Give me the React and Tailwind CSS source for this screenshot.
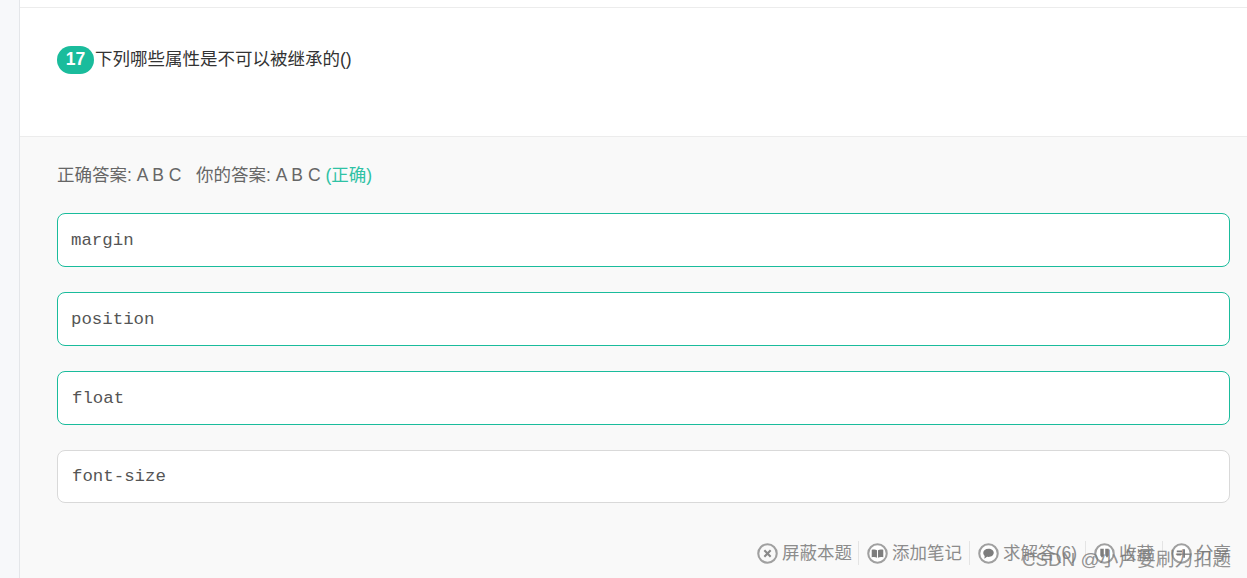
const sans = "font-['Liberation_Sans','Noto_Sans_CJK_SC',sans-serif]";

const options = [
  { text: 'margin', right: true, pad: 'pl-[13px] pt-[3px] h-[54px]' },
  { text: 'position', right: true, pad: 'pl-[13px] pt-[3px] h-[54px]' },
  { text: 'float', right: true, pad: 'pl-[14px] pt-[3px] h-[54px]' },
  { text: 'font-size', right: false, pad: 'pl-[14px] pt-[1px] h-[53px]' },
];

const BlockIcon = () => (
  <svg width="21" height="21" viewBox="0 0 20 20" fill="none">
    <circle cx="10" cy="10" r="8.800" stroke="#a0a0a0" strokeWidth="2" />
    <path d="M7 7l6 6M13 7l-6 6" stroke="#8a8a8a" strokeWidth="2" />
  </svg>
);

const NoteIcon = () => (
  <svg width="21" height="21" viewBox="0 0 20 20" fill="none">
    <circle cx="10" cy="10" r="8.800" fill="#fff" stroke="#a0a0a0" strokeWidth="2" />
    <path d="M4.500 6.500c2-.6 4-.4 5 .5v7c-1-.8-3-1-5-.5zM15.500 6.500c-2-.6-4-.4-5 .5v7c1-.8 3-1 5-.5z" fill="#7d7d7d" />
  </svg>
);

const ChatIcon = () => (
  <svg width="21" height="21" viewBox="0 0 20 20" fill="none">
    <circle cx="10" cy="10" r="8.800" fill="#fff" stroke="#a0a0a0" strokeWidth="2" />
    <path d="M10 5.500c3 0 5 1.700 5 3.900s-2 3.900-5 3.900c-.5 0-1 0-1.400-.1L6 15l.4-2.600C5.500 11.700 5 10.600 5 9.400c0-2.200 2-3.900 5-3.900z" fill="#7d7d7d" />
  </svg>
);

const StarIcon = () => (
  <svg width="21" height="21" viewBox="0 0 20 20" fill="none">
    <circle cx="10" cy="10" r="8.800" fill="#fff" stroke="#a0a0a0" strokeWidth="2" />
    <path d="M6 5.500h3.300v6.500L7.600 14 6 12zM10.700 5.500H14V12l-1.600 2-1.700-2z" fill="#7d7d7d" />
  </svg>
);

const ShareIcon = () => (
  <svg width="21" height="21" viewBox="0 0 20 20" fill="none">
    <circle cx="10" cy="10" r="8.800" fill="#fff" stroke="#a0a0a0" strokeWidth="2" />
    <path d="M5.500 8h5M5.500 11h4M12.500 6v8" stroke="#7d7d7d" strokeWidth="1.600" />
  </svg>
);

const actions = [
  { label: '屏蔽本题', icon: <BlockIcon />, cls: 'border-r border-[#e4e4e4] pr-[6px]' },
  { label: '添加笔记', icon: <NoteIcon />, cls: 'border-r border-[#e4e4e4] pr-[7px]' },
  { label: '求解答(6)', icon: <ChatIcon />, cls: 'border-r border-[#e4e4e4] pr-[8px]' },
  { label: '收藏', icon: <StarIcon />, cls: 'border-r border-[#e4e4e4] pr-[8px]' },
  { label: '分享', icon: <ShareIcon />, cls: '' },
];

export default function App() {
  return (
    <div className={`relative flex h-[578px] w-[1247px] overflow-hidden bg-[#f7f8fa] ${sans}`}>
      <div className="w-[19px] shrink-0" />
      <div className="flex min-w-0 flex-1 flex-col border-l border-[#e4e6e9]">
        <div className="h-2 shrink-0 border-b border-[#ececec] bg-white" />
        <div className="h-[129px] shrink-0 border-b border-[#ececec] bg-white pl-[37px] pt-[38px]">
          <div className="flex items-start">
            <span className="flex h-7 w-[37px] items-center justify-center rounded-full bg-[#1abc9c] pb-[2px] text-[17.5px] font-semibold text-white">
              17
            </span>
            <span className="ml-[1px] mt-[-1px] text-[17.5px] leading-7 text-[#333]">下列哪些属性是不可以被继承的()</span>
          </div>
        </div>
        <div className="flex-1 bg-[#f9f9f9] pl-[37px] pr-[17px]">
          <div className="mt-[26px] text-[17.5px] leading-6 text-[#666]">
            正确答案: A B C&nbsp;&nbsp; 你的答案: A B C <span className="text-[#2fc2a5]">(正确)</span>
          </div>
          <div className="mt-[26px] flex flex-col gap-[25px]">
            {options.map((o) => (
              <div
                key={o.text}
                className={`flex items-center rounded-lg border bg-white ${o.pad} font-['Liberation_Mono',monospace] text-[17.4px] text-[#555] ${
                  o.right ? 'border-[#1abc9c]' : 'border-[#d9d9d9]'
                }`}
              >
                {o.text}
              </div>
            ))}
          </div>
          <div className="mt-[38px] -mr-[1px] flex h-6 items-center justify-end text-[17.5px] text-[#8c8c8c]">
            {actions.map((a) => (
              <div key={a.label} className={`flex items-center gap-[4px] pl-[8px] ${a.cls}`}>
                {a.icon}
                <span className="leading-6">{a.label}</span>
              </div>
            ))}
          </div>
        </div>
      </div>
      <div className="absolute left-[1022px] top-[548px] whitespace-nowrap text-[18.8px] leading-6 text-[#777]/80">
        CSDN @小卢要刷力扣题
      </div>
    </div>
  );
}
